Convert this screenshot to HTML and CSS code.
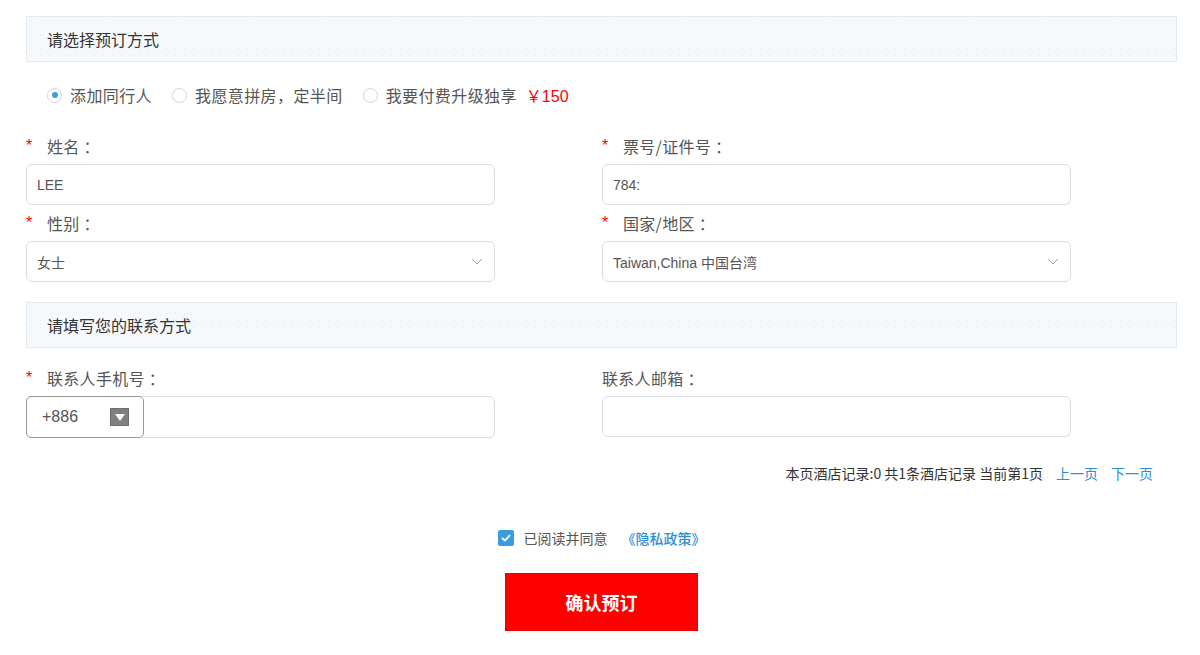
FILE: index.html
```html
<!DOCTYPE html>
<html lang="zh-CN">
<head>
<meta charset="utf-8">
<title>预订</title>
<link rel="stylesheet" href="styles.css">
</head>
<body>
<div class="page">
  <div class="section-head">请选择预订方式</div>

  <div class="radio-row">
    <label class="radio"><span class="dot checked"></span>添加同行人</label>
    <label class="radio"><span class="dot"></span>我愿意拼房，定半间</label>
    <label class="radio"><span class="dot"></span>我要付费升级独享<span class="price">￥150</span></label>
  </div>

  <div class="grid">
    <div class="field">
      <div class="label"><span class="req">*</span>姓名<span class="colon">：</span></div>
      <div class="input"><span class="val">LEE</span></div>
    </div>
    <div class="field">
      <div class="label"><span class="req">*</span>票号/证件号<span class="colon">：</span></div>
      <div class="input"><span class="val">784:</span></div>
    </div>
    <div class="field">
      <div class="label"><span class="req">*</span>性别<span class="colon">：</span></div>
      <div class="input select"><span class="val">女士</span>
        <svg class="chev" width="12" height="7" viewBox="0 0 12 7"><path d="M1 1 L6 6 L11 1" fill="none" stroke="#9aa3ab" stroke-width="1"/></svg>
      </div>
    </div>
    <div class="field">
      <div class="label"><span class="req">*</span>国家/地区<span class="colon">：</span></div>
      <div class="input select"><span class="val">Taiwan,China 中国台湾</span>
        <svg class="chev" width="12" height="7" viewBox="0 0 12 7"><path d="M1 1 L6 6 L11 1" fill="none" stroke="#9aa3ab" stroke-width="1"/></svg>
      </div>
    </div>
  </div>

  <div class="section-head second">请填写您的联系方式</div>

  <div class="grid contact">
    <div class="field">
      <div class="label"><span class="req">*</span>联系人手机号<span class="colon">：</span></div>
      <div class="input phone">
        <div class="code"><span>+886</span>
          <span class="code-btn"><svg width="10" height="7" viewBox="0 0 10 7"><path d="M0 0 H10 L5 7 Z" fill="#fff"/></svg></span>
        </div>
      </div>
    </div>
    <div class="field">
      <div class="label nostar">联系人邮箱<span class="colon">：</span></div>
      <div class="input"></div>
    </div>
  </div>

  <div class="pager">
    <span>本页酒店记录:0 共1条酒店记录 当前第1页</span>
    <a class="link">上一页</a>
    <a class="link">下一页</a>
  </div>

  <div class="agree">
    <span class="checkbox"><svg width="10" height="8" viewBox="0 0 10 8"><path d="M1 4 L4 6.5 L9 1.2" fill="none" stroke="#fff" stroke-width="1.8"/></svg></span>
    <span class="agree-text">已阅读并同意</span>
    <a class="policy">《隐私政策》</a>
  </div>

  <div class="btn-row">
    <button class="submit">确认预订</button>
  </div>
</div>
</body>
</html>
```

FILE: styles.css
```css
* { box-sizing: border-box; }
html, body { margin: 0; padding: 0; background: #fff; }
body {
  font-family: "Liberation Sans", "Noto Sans CJK SC", sans-serif;
  color: #555;
}
.page {
  width: 1151px;
  margin-left: 26px;
  padding-top: 16px;
}
.section-head {
  height: 46px;
  border: 1px solid #e3ebf0;
  background-color: #f6f9fc;
  background-image: radial-gradient(circle, #e2e9ef 0.6px, transparent 0.9px);
  background-size: 9px 7px;
  padding-left: 20px;
  display: flex;
  align-items: center;
  font-size: 16px;
  color: #333;
  font-family: "Noto Sans CJK SC", sans-serif;
}
.section-head.second { margin-top: 20px; }

.radio-row {
  display: flex;
  align-items: center;
  margin-top: 23px;
  padding-left: 21px;
  height: 20px;
  font-size: 16px;
  letter-spacing: 0.4px;
  font-family: "Noto Sans CJK SC", sans-serif;
  color: #555;
}
.radio {
  display: flex;
  align-items: center;
  margin-right: 20px;
}
.dot {
  width: 15px;
  height: 15px;
  border: 1px solid #cfd4d9;
  border-radius: 50%;
  margin-right: 8px;
  display: flex;
  align-items: center;
  justify-content: center;
}
.dot.checked::after {
  content: "";
  width: 6px;
  height: 6px;
  border-radius: 50%;
  background: #3a9ee4;
}
.price {
  color: #f00;
  margin-left: 9px;
  letter-spacing: 0;
  font-family: "Liberation Sans", "Noto Sans CJK SC", sans-serif;
}

.grid {
  display: grid;
  grid-template-columns: 469px 469px;
  column-gap: 107px;
  row-gap: 6px;
  margin-top: 29px;
}
.grid.contact { margin-top: 18px; }
.label {
  height: 24px;
  line-height: 24px;
  font-size: 16px;
  letter-spacing: 0.3px;
  color: #555;
  font-family: "Noto Sans CJK SC", sans-serif;
  margin-bottom: 6px;
  display: flex;
  align-items: center;
}
.colon { padding-left: 4px; }
.req {
  color: #f00;
  width: 21px;
  font-family: "Liberation Sans", sans-serif;
  font-size: 16px;
}
.input {
  height: 41px;
  border: 1px solid #d7dde4;
  border-radius: 6px;
  display: flex;
  align-items: center;
  padding-left: 10px;
  font-size: 14px;
  color: #555;
  background: #fff;
}
.input .val { font-family: "Liberation Sans", "Noto Sans CJK SC", sans-serif; }
.select { justify-content: space-between; padding-right: 11px; }
.chev { display: block; }

.phone { padding-left: 0; height: 42px; }
.code {
  width: 118px;
  height: 42px;
  margin: -1px 0 -1px -1px;
  border: 1px solid #9a9a9a;
  border-radius: 5px;
  display: flex;
  align-items: center;
  justify-content: space-between;
  padding: 0 14px 0 15px;
  font-size: 16px;
  color: #555;
}
.code-btn {
  width: 19px;
  height: 18px;
  background: #7f7f7f;
  border: 1px solid #6e6e6e;
  display: flex;
  align-items: center;
  justify-content: center;
}

.pager {
  display: flex;
  justify-content: flex-end;
  align-items: center;
  gap: 13px;
  margin-top: 25px;
  padding-right: 24px;
  height: 20px;
  font-size: 14px;
  color: #333;
  font-family: "Noto Sans CJK SC", sans-serif;
}
.link { color: #2d8fd5; }

.agree {
  display: flex;
  justify-content: center;
  align-items: center;
  margin-top: 45px;
  height: 20px;
  font-family: "Noto Sans CJK SC", sans-serif;
  font-size: 14px;
}
.checkbox {
  width: 16px;
  height: 16px;
  border-radius: 2px;
  background: #3b9ce0;
  display: flex;
  align-items: center;
  justify-content: center;
  margin-right: 10px;
}
.agree-text { color: #555; margin-right: 14px; }
.policy { color: #2d8fd5; font-weight: 500; }

.btn-row {
  display: flex;
  justify-content: center;
  margin-top: 25px;
}
.submit {
  width: 193px;
  height: 58px;
  background: #f00;
  border: 1px solid #e60000;
  color: #fff;
  font-size: 18px;
  font-weight: bold;
  font-family: "Noto Sans CJK SC", sans-serif;
  cursor: pointer;
}
```
